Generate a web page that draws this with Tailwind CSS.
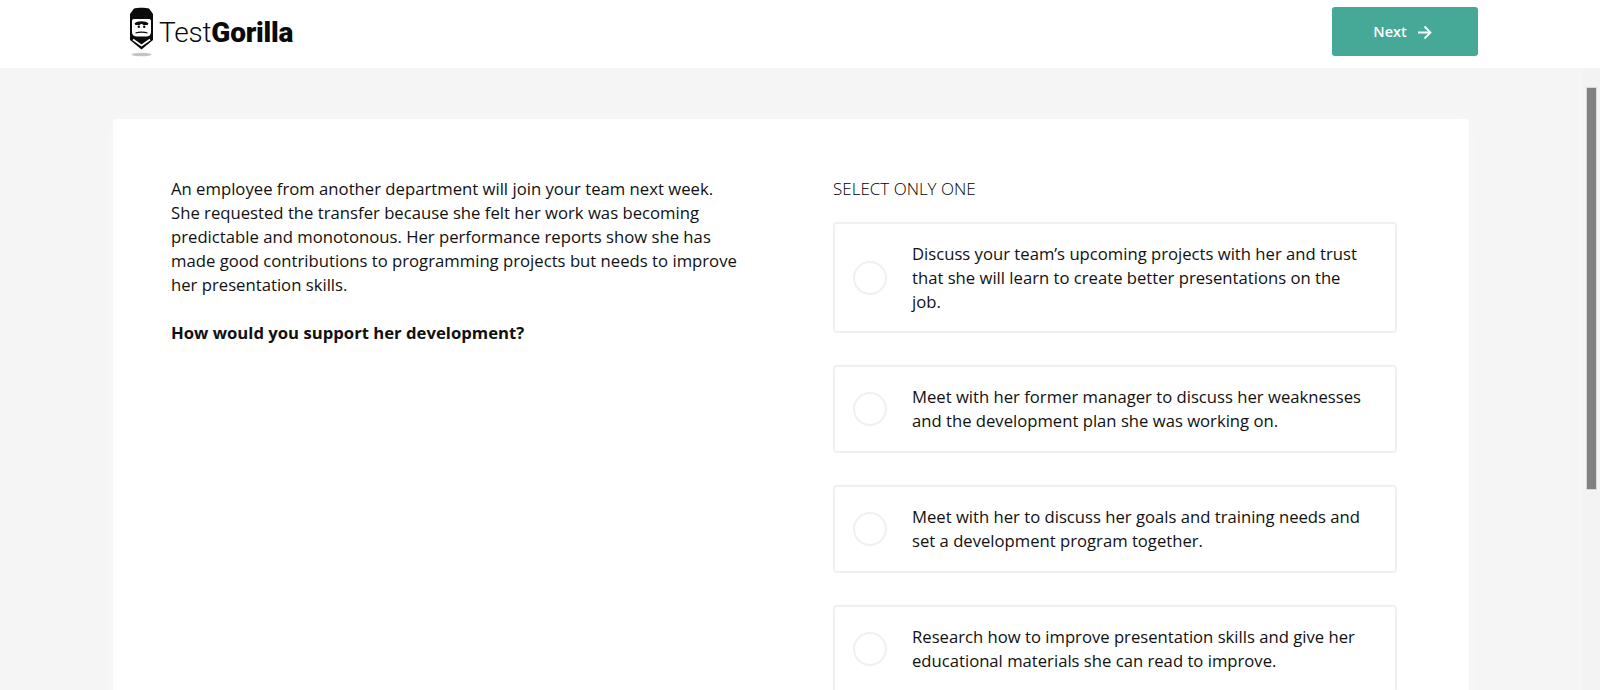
<!DOCTYPE html>
<html lang="en">
<head>
<meta charset="utf-8">
<title>TestGorilla</title>
<script src="https://cdn.jsdelivr.net/npm/@tailwindcss/browser@4"></script>
</head>
<body class="h-[690px] overflow-hidden bg-[#f5f5f5] font-['Open_Sans',sans-serif] text-[#111]">
<header class="flex h-[68px] items-center justify-between bg-white pl-[128px] pr-[122px]">
  <div class="flex items-start gap-[4px] self-start pt-[7px]">
    <svg width="27" height="50" viewBox="0 0 27 50" aria-hidden="true">
      <ellipse cx="13.5" cy="47.5" rx="10" ry="1.7" fill="#c4c4c4"/>
      <path d="M2 7 L6 1.5 C9 0.5 18 0.5 21 1.5 L25 7 V33 L13.5 42.5 L2 33 Z" fill="#0b0b0b"/>
      <path d="M4 14 C4 12.5 5 12 6.5 12 H20.5 C22 12 23 12.5 23 14 V25 C23 28 21 29.5 18 29.5 H9 C6 29.5 4 28 4 25 Z" fill="#fff"/>
      <path d="M6.5 16.5 C9 13.5 18 13.5 20.5 16.5 L19.5 18 H15.5 L13.5 16.8 L11.5 18 H7.5 Z" fill="#0b0b0b"/>
      <circle cx="10.8" cy="19.8" r="1.2" fill="#0b0b0b"/>
      <circle cx="16.2" cy="19.8" r="1.2" fill="#0b0b0b"/>
      <path d="M7.5 26 C10.5 24.8 16.5 24.8 19.5 26" stroke="#0b0b0b" stroke-width="1.1" fill="none"/>
      <path d="M5 32.5 L13.5 38.5 L22 32.5" stroke="#fff" stroke-width="1.6" fill="none"/>
    </svg>
    <span class="mt-[10px] font-['Roboto',sans-serif] text-[28px] leading-[32px] tracking-[-0.2px] text-[#0b0b0b]"><span class="font-light">Test</span><span class="font-black">Gorilla</span></span>
  </div>
  <button class="mb-[6px] flex h-[49px] w-[146px] items-center justify-center gap-[10px] rounded-[3px] bg-[#46a997] pr-[5px] pt-[2px] text-[14.5px] font-semibold text-white">
    Next
    <svg width="15" height="15" viewBox="0 0 15 15" fill="none" stroke="currentColor" stroke-width="1.8" aria-hidden="true"><path d="M1 7.5 H13.5 M7.5 1.5 L13.5 7.5 L7.5 13.5"/></svg>
  </button>
</header>
<div class="flex h-[622px]">
  <div class="w-[1583px] shrink-0 overflow-hidden pl-[113px] pt-[51px]">
    <main class="grid h-[600px] w-[1356px] grid-cols-[662px_564px] rounded-t-[4px] bg-white pl-[58px] pt-[58px] shadow-[0_0_16px_rgba(255,255,255,0.35)]">
      <section class="text-[16.7px] leading-[24px]">
        <p class="w-[570px]">An employee from another department will join your team next week. She requested the transfer because she felt her work was becoming predictable and monotonous. Her performance reports show she has made good contributions to programming projects but needs to improve her presentation skills.</p>
        <p class="mt-[24px] font-bold">How would you support her development?</p>
      </section>
      <section class="flex flex-col">
        <h2 class="text-[17px] font-light leading-[24px] text-black">SELECT ONLY ONE</h2>
        <ul class="mt-[21px] flex flex-col gap-[32px] text-[16.67px] leading-[24px]">
          <li class="flex h-[111px] items-center gap-[25px] rounded-[4px] border-2 border-[#f0f0f0] pl-[18px] pr-[30px]"><span class="size-[34px] shrink-0 rounded-full border-2 border-[#f0f0f0]"></span><span>Discuss your team’s upcoming projects with her and trust that she will learn to create better presentations on the job.</span></li>
          <li class="flex h-[88px] items-center gap-[25px] rounded-[4px] border-2 border-[#f0f0f0] pl-[18px] pr-[30px]"><span class="size-[34px] shrink-0 rounded-full border-2 border-[#f0f0f0]"></span><span>Meet with her former manager to discuss her weaknesses and the development plan she was working on.</span></li>
          <li class="flex h-[88px] items-center gap-[25px] rounded-[4px] border-2 border-[#f0f0f0] pb-[1px] pl-[18px] pr-[30px]"><span class="size-[34px] shrink-0 rounded-full border-2 border-[#f0f0f0]"></span><span>Meet with her to discuss her goals and training needs and set a development program together.</span></li>
          <li class="flex h-[88px] items-center gap-[25px] rounded-[4px] border-2 border-[#f0f0f0] pb-[1px] pl-[18px] pr-[30px]"><span class="size-[34px] shrink-0 rounded-full border-2 border-[#f0f0f0]"></span><span>Research how to improve presentation skills and give her educational materials she can read to improve.</span></li>
        </ul>
      </section>
    </main>
  </div>
  <aside class="h-[622px] w-[17px] bg-[#f3f3f3] pl-[3px] pt-[19px]"><div class="h-[403px] w-[11px] border border-[#d8d8d8] bg-[#808080]"></div></aside>
</div>
</body>
</html>
